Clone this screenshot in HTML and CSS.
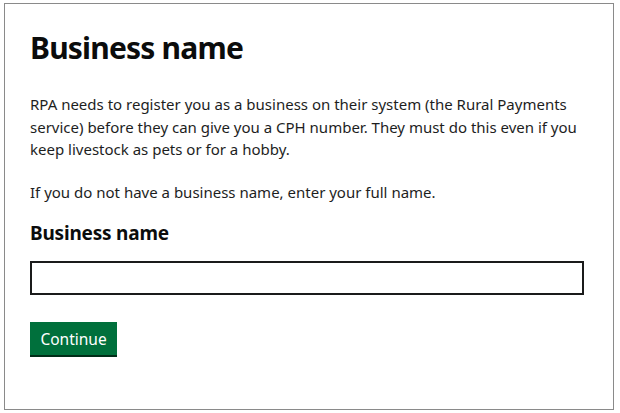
FILE: index.html
```html
<!DOCTYPE html>
<html>
<head>
<meta charset="utf-8">
<link rel="stylesheet" href="styles.css">
</head>
<body>
<div class="frame">
  <h1 class="title">Business name</h1>
  <p class="body body-first">RPA needs to register you as a business on their system (the Rural Payments service) before they can give you a CPH number. They must do this even if you keep livestock as pets or for a hobby.</p>
  <p class="body">If you do not have a business name, enter your full name.</p>
  <label class="label" for="bn">Business name</label>
  <input class="input" id="bn" type="text">
  <button class="button">Continue</button>
</div>
</body>
</html>
```
FILE: styles.css
```css
html, body {
  margin: 0;
  padding: 0;
  background: #ffffff;
}
body {
  padding: 3px 6px 4px 4px;
  font-family: "Noto Sans", "Open Sans", sans-serif;
  color: #0b0c0c;
}
.frame {
  box-sizing: border-box;
  height: 407px;
  border: 1px solid #8a8a8a;
  padding: 26px 29px 0 25px;
  display: flex;
  flex-direction: column;
  align-items: flex-start;
}
.title {
  margin: 0 0 27px 0;
  font-size: 30px;
  line-height: 36px;
  font-weight: 700;
  letter-spacing: -0.8px;
}
.body {
  margin: 0;
  font-size: 15px;
  line-height: 22.5px;
  color: #1d1e1e;
}
.body-first {
  margin-bottom: 20.5px;
}
.label {
  font-size: 19px;
  font-weight: 700;
  line-height: 25px;
  margin: 17px 0 15px 0;
  letter-spacing: -0.2px;
}
.input {
  box-sizing: border-box;
  width: 554px;
  height: 34px;
  border: 2px solid #1a1b1b;
  margin: 0 0 27px 0;
  padding: 4px;
  font-size: 16px;
  background: #fff;
}
.button {
  box-sizing: border-box;
  background: #00703c;
  color: #ffffff;
  border: 0;
  box-shadow: 0 2px 0 #002d18;
  font-family: "Noto Sans", "Open Sans", sans-serif;
  font-size: 15.5px;
  line-height: 20px;
  padding: 7px 10px 6px 10px;
  border-radius: 0;
  height: 33px;
  width: 87px;
}
```
